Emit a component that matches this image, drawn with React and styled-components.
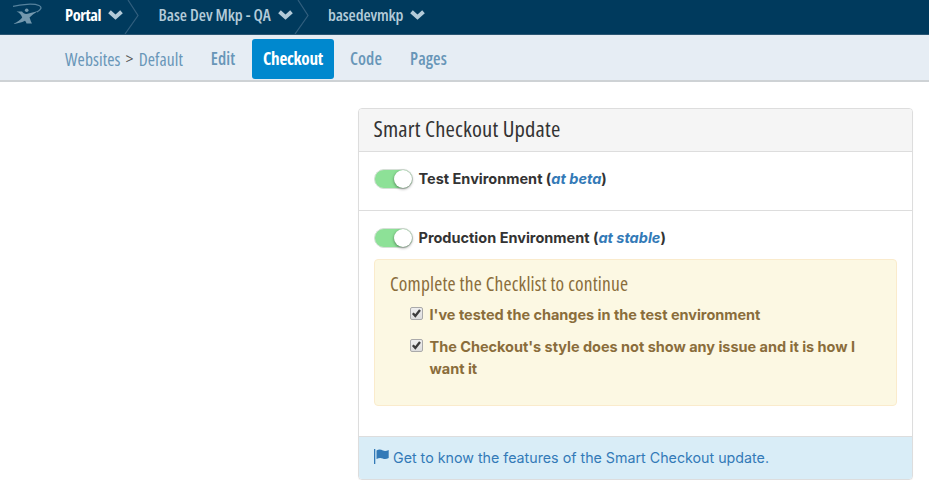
import React from "react";
import styled, { createGlobalStyle } from "styled-components";

const condensed = '"Open Sans", "Noto Sans", sans-serif';
const body = 'Inter, "Liberation Sans", sans-serif';

const Global = createGlobalStyle`
  * { box-sizing: border-box; }
  body { margin: 0; background: #fff; color: #333; font: 14.5px/22px ${body}; }
`;

const TopBar = styled.header`
  display: flex;
  align-items: center;
  height: 35px;
  padding-left: 13px;
  background: #003a5d;
  border-bottom: 1px solid #2a5673;
`;

const Logo = styled.svg`
  width: 30px;
  height: 22px;
  margin: -9px 22px 0 0;
`;

const Crumb = styled.a`
  display: flex;
  align-items: center;
  height: 34px;
  padding-bottom: 4px;
  color: ${(p) => (p.$active ? "#fff" : "#b3cbd9")};
  font: ${(p) => (p.$active ? 700 : 600)} 16.5px/22px ${condensed};
  font-stretch: 75%;
`;

const CrumbName = styled.span`
  flex: none;
  width: ${(p) => p.$width}px;
  letter-spacing: ${(p) => p.$spacing}px;
  white-space: nowrap;
`;

const Chevron = styled.svg`
  width: 15px;
  height: 10px;
  margin-left: 7px;
`;

const Divider = styled.svg`
  width: 15px;
  height: 34px;
  margin: 0 19.5px 0 1px;
`;

const SubBar = styled.nav`
  display: flex;
  align-items: center;
  height: 47px;
  padding: 2px 0 0 65px;
  background: #e6edf4;
  border-bottom: 2px solid #ced2d5;
  color: #6896b8;
  font: 400 17.5px/22px ${condensed};
  font-stretch: 75%;
  letter-spacing: 0.1px;
`;

const Path = styled.div`
  display: flex;
  align-items: center;
  gap: 5px;
  width: 132px;
  white-space: nowrap;
`;

const Arrow = styled.span`
  color: #555;
  font-size: 14px;
  font-stretch: 100%;
`;

const Tab = styled.a`
  display: flex;
  align-items: center;
  justify-content: center;
  width: ${(p) => p.$width}px;
  height: 40px;
  border-radius: 3px;
  background: ${(p) => (p.$active ? "#0088ce" : "transparent")};
  color: ${(p) => (p.$active ? "#fff" : "#6896b8")};
  font-size: 17.2px;
  font-weight: ${(p) => (p.$active ? 700 : 600)};
  letter-spacing: ${(p) => (p.$active ? -0.3 : 0.1)}px;
  margin-right: ${(p) => p.$gap || 0}px;
`;

const Panel = styled.section`
  width: 555px;
  height: 372px;
  margin: 26px 0 0 358px;
  border: 1px solid #ddd;
  border-radius: 4px;
  overflow: hidden;
  box-shadow: 0 1px 1px rgba(0, 0, 0, 0.05);
`;

const PanelHead = styled.h1`
  height: 43px;
  margin: 0;
  padding: 0 14.5px;
  background: #f5f5f5;
  border-bottom: 1px solid #ddd;
  font: 400 22.6px/40px ${condensed};
  font-stretch: 75%;
  letter-spacing: 0.17px;
`;

const Environment = styled.div`
  height: ${(p) => p.$height}px;
  padding: 16px 15px 0;
  border-bottom: 1px solid #ddd;
`;

const Setting = styled.label`
  display: flex;
  align-items: center;
  height: 22px;
  gap: 5.5px;
  font-weight: 700;
  a { color: #337ab7; font-style: italic; }
`;

const Track = styled.span`
  display: flex;
  justify-content: flex-end;
  width: 39px;
  height: 20px;
  border: 1px solid #d5dfd6;
  border-radius: 10px;
  background: #8de197;
`;

const Knob = styled.span`
  width: 18px;
  height: 18px;
  border-radius: 50%;
  background: #fff;
  box-shadow: 0 1px 3px rgba(0, 0, 0, 0.45);
`;

const Checklist = styled.div`
  height: 147px;
  margin-top: 10px;
  padding: 12px 15px;
  border: 1px solid #faebcc;
  border-radius: 4px;
  background: #fcf8e3;
  color: #8a6d3b;
`;

const ChecklistTitle = styled.h2`
  margin: 0 0 8px;
  font: 400 19.5px/24px ${condensed};
  font-stretch: 75%;
  letter-spacing: 0.18px;
`;

const Item = styled.label`
  display: flex;
  gap: 6.5px;
  margin: 0 0 10px 20px;
  font-weight: 700;
  letter-spacing: -0.02px;
`;

const Box = styled.span`
  flex: none;
  display: flex;
  width: 13px;
  height: 13px;
  margin-top: 3px;
  border: 1px solid #aaa;
  border-radius: 2px;
  background: linear-gradient(#eee, #dedede);
`;

const Foot = styled.footer`
  display: flex;
  align-items: center;
  height: 43px;
  padding: 0 15px 2px;
  gap: 4px;
  background: #d9edf7;
  color: #337ab7;
  font-size: 14.25px;
`;

const Flag = styled.svg`
  width: 15px;
  height: 15px;
  margin-top: -2px;
`;

const Down = () => (
  <Chevron viewBox="0 0 15 10"><path d="M1.500 1.700 7.500 7.200 13.500 1.700" fill="none" stroke="#b3cbd9" strokeWidth="3.900" /></Chevron>
);
const Sep = () => (
  <Divider viewBox="0 0 15 34"><path d="M4 0 14 15.500 1 34" fill="none" stroke="#315f7e" strokeWidth="1.200" /></Divider>
);
const Toggle = () => <Track><Knob /></Track>;
const Check = () => (
  <Box><svg width="11" height="11" viewBox="0 0 11 11"><path d="M1.800 5.300 4.300 7.900 9 2" fill="none" stroke="#3c3c3c" strokeWidth="2.300" /></svg></Box>
);

export default function App() {
  return (
    <>
      <Global />
      <TopBar>
        <Logo viewBox="0 0 30 22">
          <path d="M0 4.500C8 2.100 21 1.300 26 3.500 29.500 5.200 28 7.500 24 10" fill="none" stroke="#55829d" strokeWidth="1.300" />
          <g fill="#7398ae">
            <circle cx="13.700" cy="8.300" r="1.800" />
            <path d="M3.500 9.500H9C10 11 11.500 12 13.200 12 16.500 11.700 20 10.300 25 9 21.500 11.300 18.500 13.500 16.500 15.500 17.500 18 18 20 19 21.500H13.500C13.200 20.500 12.800 19.500 12 18.800 8.500 20.500 5 21.500 0 22 4.500 20 8 17.500 9.200 15.500 8.500 13 6.500 10.500 3.500 9.500Z" />
          </g>
        </Logo>
        <Crumb $active><CrumbName $width={36} $spacing={-0.45}>Portal</CrumbName><Down /></Crumb>
        <Sep />
        <Crumb><CrumbName $width={112} $spacing={-0.02}>Base Dev Mkp - QA</CrumbName><Down /></Crumb>
        <Sep />
        <Crumb><CrumbName $width={75} $spacing={-0.13}>basedevmkp</CrumbName><Down /></Crumb>
      </TopBar>
      <SubBar>
        <Path><a>Websites</a><Arrow>&gt;</Arrow><a>Default</a></Path>
        <Tab $width={52} $gap={3}>Edit</Tab>
        <Tab $active $width={82}>Checkout</Tab>
        <Tab $width={64}>Code</Tab>
        <Tab $width={61}>Pages</Tab>
      </SubBar>
      <Panel>
        <PanelHead>Smart Checkout Update</PanelHead>
        <Environment $height={59}>
          <Setting><Toggle /><span>Test Environment (<a>at beta</a>)</span></Setting>
        </Environment>
        <Environment $height={226}>
          <Setting><Toggle /><span>Production Environment (<a>at stable</a>)</span></Setting>
          <Checklist>
            <ChecklistTitle>Complete the Checklist to continue</ChecklistTitle>
            <Item><Check /><span>I've tested the changes in the test environment</span></Item>
            <Item><Check /><span>The Checkout's style does not show any issue and it is how I want it</span></Item>
          </Checklist>
        </Environment>
        <Foot>
          <Flag viewBox="0 0 15 15"><path d="M0 0h1.300v15H0zM2.500 1.500C5-.2 7 .6 9 1.500c2 .8 3.700.3 5.700-.6v8c-2 1.200-4 1.500-6 .6-2-.8-3.700-.8-6.200.6Z" fill="currentColor" /></Flag>
          <a>Get to know the features of the Smart Checkout update.</a>
        </Foot>
      </Panel>
    </>
  );
}
